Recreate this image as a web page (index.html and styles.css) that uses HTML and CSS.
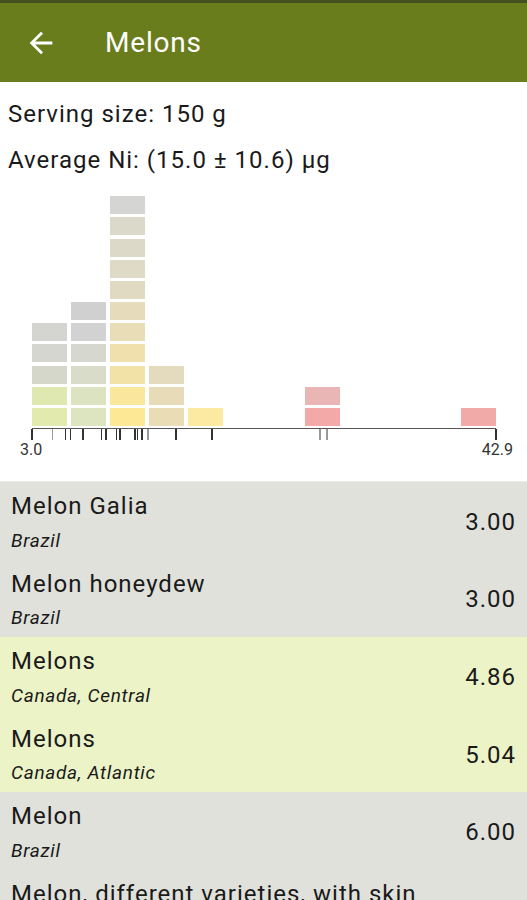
FILE: index.html
```html
<!DOCTYPE html>
<html lang="en">
<head>
    <meta charset="UTF-8">
    <meta name="viewport" content="width=device-width, initial-scale=1.0">
    <title>Melons</title>
    <link rel="stylesheet" href="styles.css">
</head>
<body>
    <header class="toolbar">
        <svg class="back" viewBox="0 0 24 24" width="34" height="34">
            <path d="M20 11H7.83l5.59-5.59L12 4l-8 8 8 8 1.41-1.41L7.83 13H20v-2z" fill="#fff"/>
        </svg>
        <span class="title">Melons</span>
    </header>

    <div class="info">
        <p>Serving size: 150 g</p>
        <p>Average Ni: (15.0 ± 10.6) µg</p>
    </div>

    <div class="chart">
        <div class="bars" id="bars"></div>
        <div class="axis" id="axis"></div>
        <div class="labels">
            <span>3.0</span>
            <span>42.9</span>
        </div>
    </div>

    <ul class="foods" id="foods"></ul>

    <script>
        // colores de cada bloque, de abajo hacia arriba
        const bins = [
            ['#e2eaad', '#e0e8b2', '#d6d7cb', '#d5d6cf', '#d4d5d0'],
            ['#dde4c0', '#dce3c1', '#d9dcc9', '#d6d7ce', '#d1d2d1', '#d0d0d0'],
            ['#fde896', '#fbe69e', '#f3e2a8', '#efe0ae', '#e9ddb7', '#e6dcbb', '#e0dac3', '#dedac6', '#dcd9c8', '#dbd9ca', '#d5d5d3'],
            ['#eadcb4', '#e8dbb8', '#e4dabd'],
            ['#fce9a2'],
            [], [],
            ['#f2a9a7', '#e9b6b5'],
            [], [], [],
            ['#f2aaa8']
        ];

        const ticks = [3.0, 4.8, 5.9, 6.35, 7.4, 9.0, 9.4, 10.3, 10.6, 11.9, 12.1, 12.5, 13.0, 15.4, 18.5, 27.8, 28.4, 42.9];
        const lightTicks = [4.8, 13.0, 27.8, 28.4];
        const min = 3.0, max = 42.9;

        const foods = [
            { name: 'Melon Galia', origin: 'Brazil', ni: 3.00, tone: 'grey' },
            { name: 'Melon honeydew', origin: 'Brazil', ni: 3.00, tone: 'grey' },
            { name: 'Melons', origin: 'Canada, Central', ni: 4.86, tone: 'green' },
            { name: 'Melons', origin: 'Canada, Atlantic', ni: 5.04, tone: 'green' },
            { name: 'Melon', origin: 'Brazil', ni: 6.00, tone: 'grey' },
            { name: 'Melon, different varieties, with skin', origin: 'Germany', ni: 6.15, tone: 'grey' }
        ];

        const barsEl = document.getElementById('bars');
        bins.forEach(colores => {
            const col = document.createElement('div');
            col.className = 'bin';
            colores.forEach(c => {
                const cell = document.createElement('div');
                cell.className = 'cell';
                cell.style.background = c;
                col.appendChild(cell);
            });
            barsEl.appendChild(col);
        });

        const axisEl = document.getElementById('axis');
        ticks.forEach(v => {
            const t = document.createElement('span');
            t.className = lightTicks.includes(v) ? 'tick light' : 'tick';
            t.style.left = ((v - min) / (max - min) * 100) + '%';
            axisEl.appendChild(t);
        });

        const list = document.getElementById('foods');
        foods.forEach(f => {
            const li = document.createElement('li');
            li.className = 'food ' + f.tone;
            li.innerHTML = `<div class="food-text"><div class="food-name">${f.name}</div><div class="food-origin">${f.origin}</div></div><div class="food-value">${f.ni.toFixed(2)}</div>`;
            list.appendChild(li);
        });
    </script>
</body>
</html>
```

FILE: styles.css
```css
body {
    margin: 0;
    font-family: Roboto, "Noto Sans", sans-serif;
    color: #1a1a1a;
    background: #fff;
    overflow: hidden;
}
.toolbar {
    height: 79px;
    border-top: 3px solid #434f1f;
    background: #6a7d1d;
    display: flex;
    align-items: center;
    padding-left: 24px;
}
.back {
    display: block;
}
.title {
    margin-left: 47px;
    font-size: 28px;
    letter-spacing: 0.8px;
    color: #fff;
}
.info {
    padding: 9px 8px 0;
}
.info p {
    margin: 0;
    font-size: 24px;
    line-height: 46px;
    letter-spacing: 1px;
}
.chart {
    margin: 13px 0 21px 32px;
    width: 464px;
}
.bars {
    display: flex;
    align-items: flex-end;
    gap: 4px;
    height: 230px;
    margin-bottom: 2px;
}
.bin {
    width: 35px;
    flex: none;
    display: flex;
    flex-direction: column-reverse;
    gap: 3.2px;
}
.cell {
    height: 18px;
}
.axis {
    position: relative;
    height: 11px;
    border-top: 1.5px solid #555;
}
.tick {
    position: absolute;
    top: 0;
    width: 1.5px;
    height: 11px;
    margin-left: -1px;
    background: #333;
}
.tick.light {
    background: #999;
}
.labels {
    display: flex;
    justify-content: space-between;
    margin: 0 -17px 0 -12px;
    font-size: 16px;
    line-height: 20px;
    color: #333;
}
.foods {
    list-style: none;
    margin: 0;
    padding: 0;
    border-top: 1px solid #ebebe8;
}
.food {
    display: flex;
    align-items: center;
    justify-content: space-between;
    padding: 8px 11px 6px 11px;
}
.food.grey {
    background: #e0e1db;
}
.food.green {
    background: #ebf3c7;
}
.food-name {
    font-size: 24px;
    line-height: 32px;
    letter-spacing: 1px;
    white-space: nowrap;
}
.food-origin {
    margin-top: 5.6px;
    font-size: 19px;
    line-height: 26px;
    letter-spacing: 0.7px;
    font-style: italic;
}
.food-value {
    font-size: 24px;
    letter-spacing: 1px;
}
```
